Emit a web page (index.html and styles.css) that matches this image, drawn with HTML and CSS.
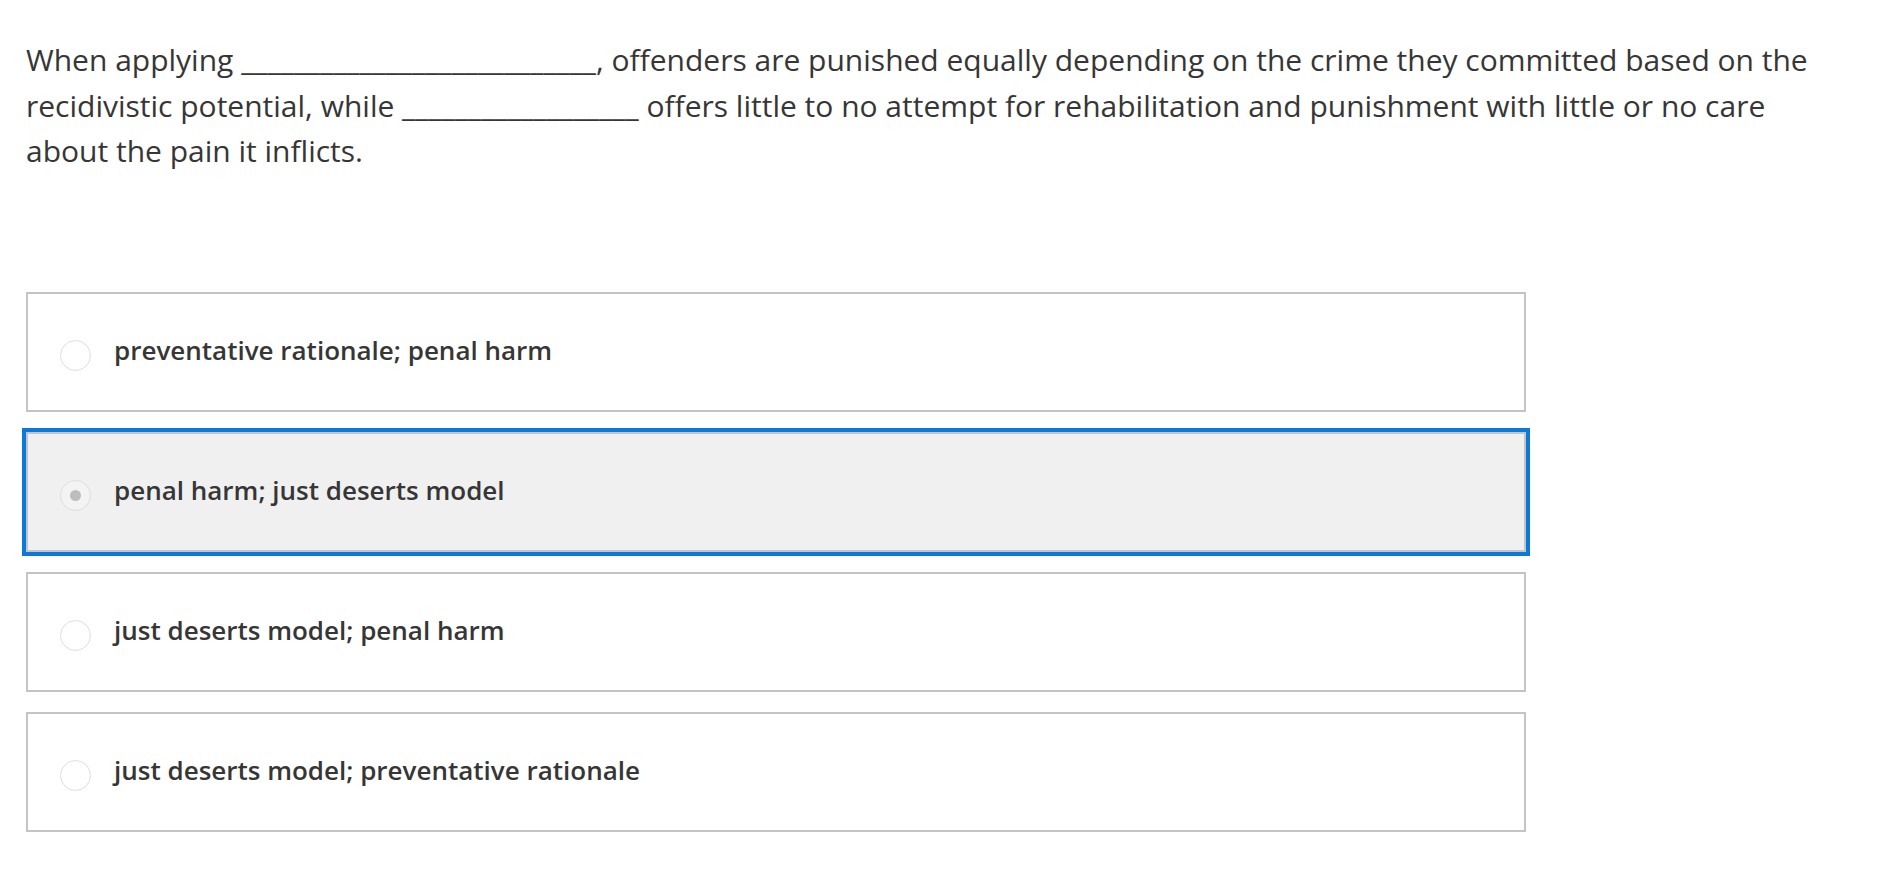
FILE: index.html
```html
<!DOCTYPE html>
<html lang="en">
<head>
<meta charset="utf-8">
<title>Question</title>
<link rel="stylesheet" href="styles.css">
</head>
<body>
<div class="question">
  <p class="prompt">When applying <span class="blank">___________________________</span>, offenders are punished equally depending on the crime they committed based on the recidivistic potential, while <span class="blank">__________________</span> offers little to no attempt for rehabilitation and punishment with little or no care about the pain it inflicts.</p>
  <ul class="answers">
    <li class="answer"><span class="radio"></span><span class="label">preventative rationale; penal harm</span></li>
    <li class="answer selected"><span class="radio checked"></span><span class="label">penal harm; just deserts model</span></li>
    <li class="answer"><span class="radio"></span><span class="label">just deserts model; penal harm</span></li>
    <li class="answer"><span class="radio"></span><span class="label">just deserts model; preventative rationale</span></li>
  </ul>
</div>
</body>
</html>
```
FILE: styles.css
```css
html, body {
  margin: 0;
  padding: 0;
  background: #ffffff;
}
body {
  font-family: "Open Sans", "Liberation Sans", sans-serif;
  color: #333333;
}
.question {
  padding: 37px 0 0 26px;
}
.prompt {
  margin: 0;
  width: 1810px;
  font-size: 30px;
  line-height: 45.5px;
  color: #363636;
}
.answers {
  list-style: none;
  margin: 118px 0 0 0;
  padding: 0;
  width: 1500px;
  display: flex;
  flex-direction: column;
  gap: 20px;
}
.answer {
  box-sizing: border-box;
  height: 120px;
  border: 2px solid #c4c4c4;
  background: #ffffff;
  display: flex;
  align-items: center;
  padding-left: 32px;
}
.answer.selected {
  background: #f0f0f0;
  outline: 4px solid #0a79d8;
}
.radio {
  box-sizing: border-box;
  width: 31px;
  height: 31px;
  border-radius: 50%;
  border: 1px solid #dedede;
  background: #ffffff;
  margin-top: 8px;
  margin-right: 23px;
  display: flex;
  align-items: center;
  justify-content: center;
  flex: none;
}
.radio.checked {
  background: #f3f3f3;
}
.radio.checked::after {
  content: "";
  width: 11px;
  height: 11px;
  border-radius: 50%;
  background: #bdbdbd;
}
.label {
  font-size: 26px;
  font-weight: 600;
  color: #363636;
  margin-bottom: 4px;
}
```
